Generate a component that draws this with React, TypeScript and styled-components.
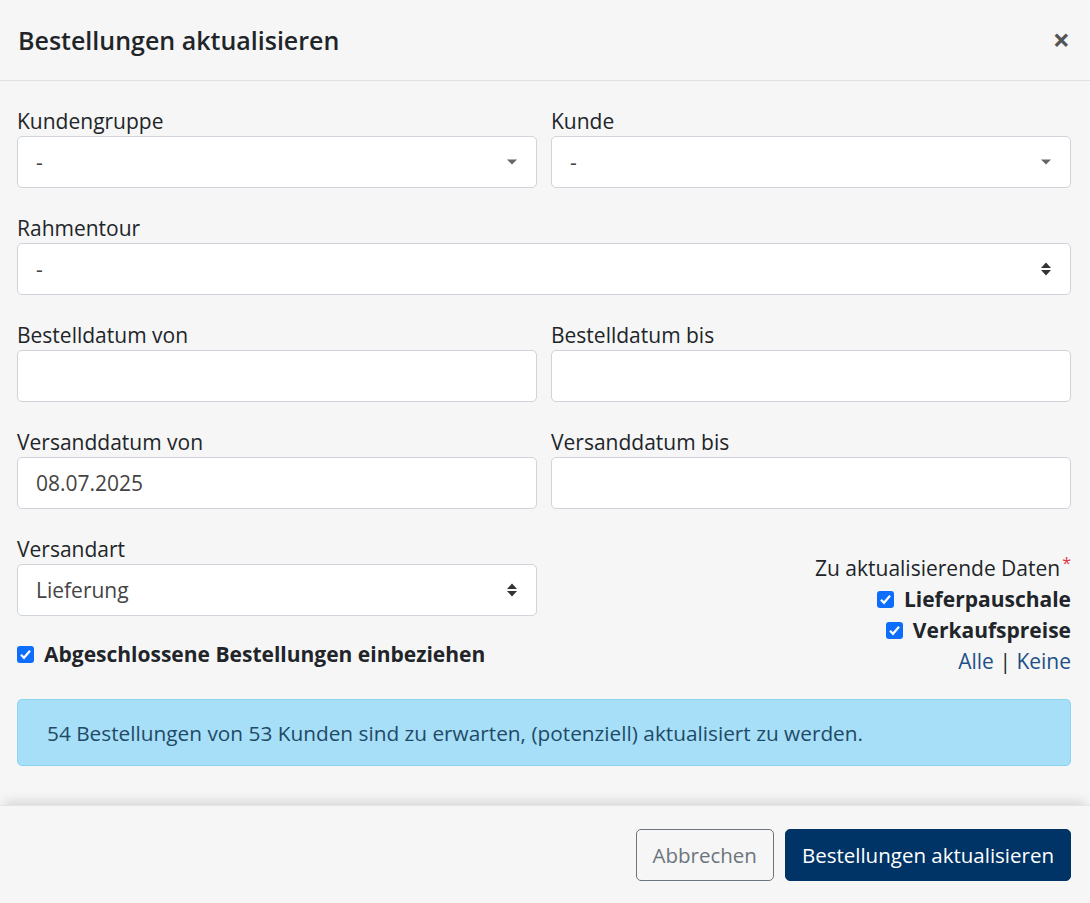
import styled, { createGlobalStyle } from 'styled-components';

const Global = createGlobalStyle`
  body { margin: 0; background: #f6f6f6; font-family: "Open Sans", "Noto Sans", sans-serif; color: #212529; }
`;

const Modal = styled.div`
  width: 1090px;
  height: 903px;
  display: flex;
  flex-direction: column;
  background: #f6f6f6;
`;

const Header = styled.div`
  height: 81px;
  box-sizing: border-box;
  border-bottom: 1px solid #dee2e6;
  display: flex;
  align-items: center;
  justify-content: space-between;
  padding: 0 20px 0 18px;
`;

const Title = styled.h1`
  margin: 0;
  font-size: 25px;
  font-weight: 600;
`;

const Close = styled.span`
  font-size: 30px;
  font-weight: 700;
  color: #555;
  line-height: 1;
`;

const Body = styled.div`
  flex: 1;
  padding: 26px 19px 0 17px;
  display: flex;
  flex-direction: column;
`;

const Row = styled.div<{ $cols?: number }>`
  display: grid;
  grid-template-columns: ${p => (p.$cols === 1 ? '1fr' : '1fr 1fr')};
  column-gap: 14px;
  margin-bottom: 26px;
`;

const Field = styled.div`
  display: flex;
  flex-direction: column;
`;

const Label = styled.label`
  font-size: 21px;
  line-height: 28px;
  margin-bottom: 1px;
`;

const Input = styled.div`
  height: 52px;
  box-sizing: border-box;
  border: 1px solid #ced4da;
  border-radius: 5px;
  background: #fff;
  display: flex;
  align-items: center;
  justify-content: space-between;
  padding: 0 18px;
  font-size: 21px;
  color: #444;
`;

const Caret = () => (
  <svg width="12" height="8" viewBox="0 0 12 8"><path d="M1 1.5h10L6 6.5z" fill="#666" /></svg>
);
const Updown = () => (
  <svg width="12" height="16" viewBox="0 0 12 16"><path d="M1 7L6 1.5L11 7z M1 9l5 5.5L11 9z" fill="#333" /></svg>
);

const Right = styled.div`
  display: flex;
  flex-direction: column;
  align-items: flex-end;
  font-size: 21px;
  line-height: 31px;
  padding-top: 18px;
`;

const Star = styled.span`
  color: #dc3545;
  font-size: 16px;
  vertical-align: top;
  line-height: 20px;
  margin-left: 2px;
`;

const Check = styled.label`
  display: flex;
  align-items: center;
  gap: 10px;
  font-weight: 700;
  font-size: 21px;
`;

const Box = () => (
  <svg width="17" height="17" viewBox="0 0 17 17">
    <rect width="17" height="17" rx="3" fill="#0d6efd" />
    <path d="M4 8.8l3 3 6-7" stroke="#fff" strokeWidth="2.2" fill="none" />
  </svg>
);

const Link = styled.a`
  color: #1e4f87;
  text-decoration: none;
`;

const Alert = styled.div`
  margin-top: 22px;
  height: 67px;
  box-sizing: border-box;
  background: #a6dff7;
  border: 1px solid #8dd3f1;
  border-radius: 5px;
  display: flex;
  align-items: center;
  padding: 0 29px;
  font-size: 20.8px;
  color: #1f4a67;
`;

const Footer = styled.div`
  height: 97px;
  border-top: 1px solid #e4e4e4;
  box-shadow: 0 -8px 10px -4px rgba(0, 0, 0, 0.12);
  display: flex;
  justify-content: flex-end;
  align-items: center;
  gap: 11px;
  padding: 0 19px 0 0;
`;

const Button = styled.button<{ $primary?: boolean }>`
  height: 52px;
  font-family: inherit;
  font-size: 20.5px;
  border-radius: 5px;
  padding: 0 16px;
  border: 1px solid ${p => (p.$primary ? '#003366' : '#6c757d')};
  background: ${p => (p.$primary ? '#003366' : 'transparent')};
  color: ${p => (p.$primary ? '#fff' : '#6c757d')};
`;

export default function App() {
  return (
    <Modal>
      <Global />
      <Header>
        <Title>Bestellungen aktualisieren</Title>
        <Close>×</Close>
      </Header>
      <Body>
        <Row>
          <Field><Label>Kundengruppe</Label><Input>-<Caret /></Input></Field>
          <Field><Label>Kunde</Label><Input>-<Caret /></Input></Field>
        </Row>
        <Row $cols={1}>
          <Field><Label>Rahmentour</Label><Input>-<Updown /></Input></Field>
        </Row>
        <Row>
          <Field><Label>Bestelldatum von</Label><Input /></Field>
          <Field><Label>Bestelldatum bis</Label><Input /></Field>
        </Row>
        <Row>
          <Field><Label>Versanddatum von</Label><Input>08.07.2025</Input></Field>
          <Field><Label>Versanddatum bis</Label><Input /></Field>
        </Row>
        <Row style={{ marginBottom: 0 }}>
          <Field>
            <Label>Versandart</Label>
            <Input>Lieferung<Updown /></Input>
            <Check style={{ marginTop: 24 }}><Box />Abgeschlossene Bestellungen einbeziehen</Check>
          </Field>
          <Right>
            <span>Zu aktualisierende Daten<Star>*</Star></span>
            <Check><Box />Lieferpauschale</Check>
            <Check><Box />Verkaufspreise</Check>
            <span><Link>Alle</Link> | <Link>Keine</Link></span>
          </Right>
        </Row>
        <Alert>54 Bestellungen von 53 Kunden sind zu erwarten, (potenziell) aktualisiert zu werden.</Alert>
      </Body>
      <Footer>
        <Button>Abbrechen</Button>
        <Button $primary>Bestellungen aktualisieren</Button>
      </Footer>
    </Modal>
  );
}
